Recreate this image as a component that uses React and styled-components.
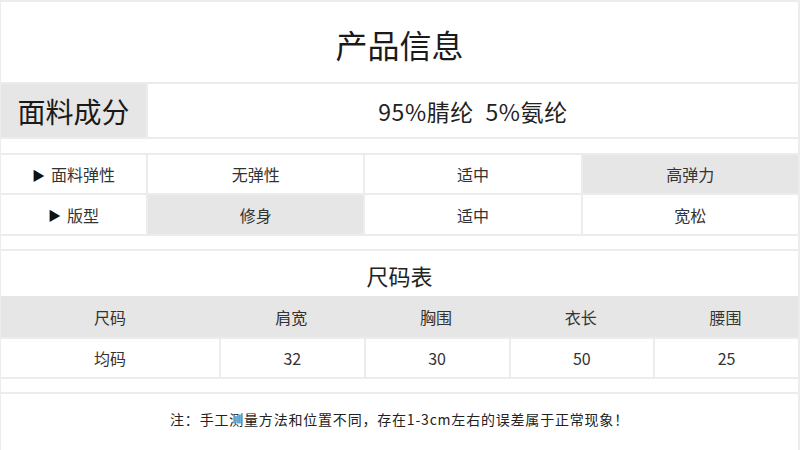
import styled, { createGlobalStyle } from "styled-components";

const GlobalStyle = createGlobalStyle`
  html, body {
    margin: 0;
    padding: 0;
    background: #ffffff;
  }
  body {
    font-family: "Noto Sans CJK SC", "Noto Sans", sans-serif;
    color: #333333;
  }
`;

const line = "#ececec";
const shade = "#e6e6e6";

const Sheet = styled.div`
  width: 800px;
  height: 450px;
  box-sizing: border-box;
  border-top: 2px solid ${line};
  border-left: 1px solid ${line};
  border-right: 2px solid ${line};
  display: flex;
  flex-direction: column;
  overflow: hidden;
`;

const Title = styled.div`
  height: 80px;
  flex-shrink: 0;
  display: flex;
  align-items: center;
  justify-content: center;
  padding-top: 4px;
  box-sizing: border-box;
  font-size: 32px;
  color: #1a1a1a;
`;

const Row = styled.div`
  display: flex;
  height: ${(p) => p.$h}px;
  border-top: 2px solid ${line};
  flex-shrink: 0;
`;

const Cell = styled.div`
  width: ${(p) => (p.$w ? `${p.$w}px` : "auto")};
  flex: ${(p) => (p.$w ? "none" : "1")};
  display: flex;
  align-items: center;
  justify-content: center;
  background: ${(p) => (p.$shade ? shade : "#ffffff")};
  font-size: ${(p) => p.$size || 16}px;
  letter-spacing: ${(p) => p.$track || 0}px;
  color: ${(p) => p.$color || "#333333"};
  white-space: pre;
  box-sizing: border-box;
  & + & {
    border-left: 2px solid ${line};
  }
`;

const Spacer = styled.div`
  height: ${(p) => p.$h || 14}px;
  flex-shrink: 0;
  border-top: 2px solid ${line};
`;

const SubTitle = styled.div`
  height: 47px;
  display: flex;
  align-items: center;
  justify-content: center;
  padding-top: 2px;
  box-sizing: border-box;
  font-size: 22px;
  color: #222222;
  flex-shrink: 0;
  border-top: 2px solid ${line};
`;

const HeadRow = styled.div`
  display: flex;
  height: 41px;
  background: ${shade};
  flex-shrink: 0;
`;

const HeadCell = styled.div`
  width: ${(p) => (p.$w ? `${p.$w}px` : "auto")};
  flex: ${(p) => (p.$w ? "none" : "1")};
  display: flex;
  align-items: center;
  justify-content: center;
  font-size: 16px;
  color: #333333;
`;

const Note = styled.div`
  flex: 1;
  display: flex;
  align-items: center;
  justify-content: center;
  padding-bottom: 6px;
  font-size: 14px;
  color: #222222;
  letter-spacing: 0.8px;
  border-top: 2px solid ${line};
`;

const Arrow = styled.span`
  font-size: 13px;
  margin-right: 6px;
  color: #111111;
`;

const specs = [
  { label: "面料弹性", items: ["无弹性", "适中", "高弹力"], pick: 2, h: 38 },
  { label: "版型", items: ["修身", "适中", "宽松"], pick: 0, h: 39 },
];

const sizeHead = ["尺码", "肩宽", "胸围", "衣长", "腰围"];
const sizeRow = ["均码", "32", "30", "50", "25"];

export default function App() {
  return (
    <>
      <GlobalStyle />
      <Sheet>
        <Title>产品信息</Title>
        <Row $h={53}>
          <Cell $w={145} $shade $size={28} $color="#1a1a1a">
            面料成分
          </Cell>
          <Cell $size={23} $track={0.6} $color="#222222">
            {"95%腈纶  5%氨纶"}
          </Cell>
        </Row>
        <Spacer $h={14} />
        {specs.map((s) => (
          <Row key={s.label} $h={s.h}>
            <Cell $w={145}>
              <Arrow>▶</Arrow>
              {s.label}
            </Cell>
            {s.items.map((it, i) => (
              <Cell key={i} $shade={i === s.pick}>
                {it}
              </Cell>
            ))}
          </Row>
        ))}
        <Spacer $h={13} />
        <SubTitle>尺码表</SubTitle>
        <HeadRow>
          {sizeHead.map((h, i) => (
            <HeadCell key={h} $w={i === 0 ? 218 : null}>
              {h}
            </HeadCell>
          ))}
        </HeadRow>
        <Row $h={38}>
          {sizeRow.map((v, i) => (
            <Cell key={i} $w={i === 0 ? 218 : null}>
              {v}
            </Cell>
          ))}
        </Row>
        <Spacer $h={13} />
        <Note>注：手工测量方法和位置不同，存在1-3cm左右的误差属于正常现象！</Note>
      </Sheet>
    </>
  );
}
